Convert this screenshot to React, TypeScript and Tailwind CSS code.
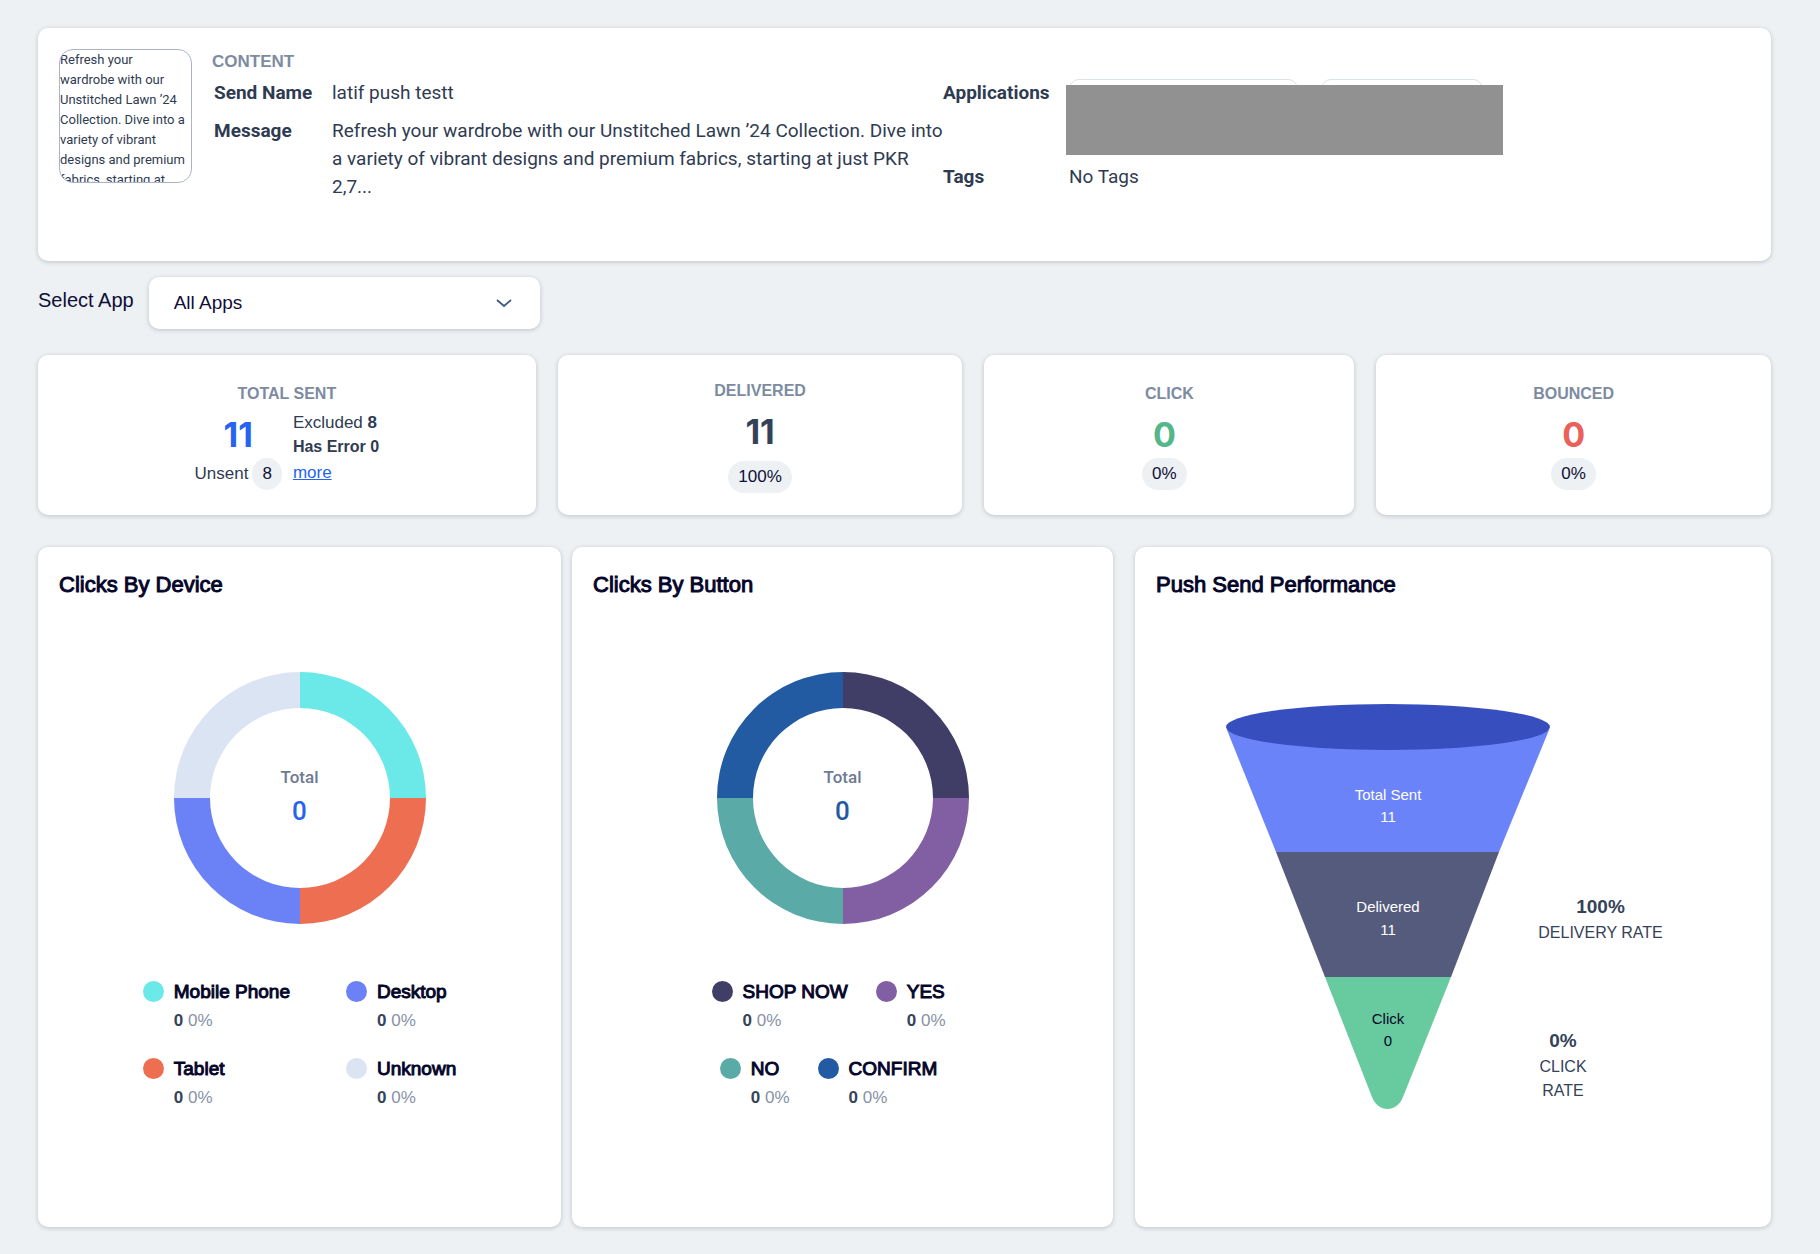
import React from "react";

const card = "rounded-[10px] bg-white shadow-[0_1px_4px_rgba(45,55,72,0.25)]";
const strong = "[-webkit-text-stroke:1px_currentColor]";
const figure = "font-[Inter,sans-serif] text-[34px] leading-[46px] font-bold";

type Slice = { label: string; color: string };

const devices: Slice[] = [
  { label: "Mobile Phone", color: "#6be8e8" },
  { label: "Desktop", color: "#6b82f7" },
  { label: "Tablet", color: "#ed6e51" },
  { label: "Unknown", color: "#dbe4f3" },
];

const buttons: Slice[] = [
  { label: "SHOP NOW", color: "#403e66" },
  { label: "YES", color: "#815fa2" },
  { label: "NO", color: "#5aaba7" },
  { label: "CONFIRM", color: "#235ba3" },
];

const message = "Refresh your wardrobe with our Unstitched Lawn ’24 Collection. Dive into a variety of vibrant designs and premium fabrics, starting at";

function Pill({ children }: { children: React.ReactNode }) {
  return (
    <span className="inline-flex h-8 items-center justify-center rounded-2xl bg-[#edf1f4] px-[10px] text-[17px] text-[#0f0f37]">
      {children}
    </span>
  );
}

function StatTitle({ children }: { children: React.ReactNode }) {
  return <h2 className="text-base leading-[26px] font-bold text-[#7d8ba1]">{children}</h2>;
}

/* Four equal quarters, listed clockwise from twelve o'clock. */
function Donut({ colors, total, totalClass }: { colors: string[]; total: number; totalClass: string }) {
  const quarters = [
    "M127 1A126 126 0 0 1 253 127H217A90 90 0 0 0 127 37Z",
    "M253 127A126 126 0 0 1 127 253V217A90 90 0 0 0 217 127Z",
    "M127 253A126 126 0 0 1 1 127H37A90 90 0 0 0 127 217Z",
    "M1 127A126 126 0 0 1 127 1V37A90 90 0 0 0 37 127Z",
  ];
  return (
    <div className="relative mx-auto mt-[70px] size-[254px]">
      <svg viewBox="0 0 254 254" className="size-full" aria-hidden="true">
        {quarters.map((d, i) => (
          <path key={d} d={d} fill={colors[i]} />
        ))}
      </svg>
      <div className="absolute inset-0 flex flex-col items-center justify-center pb-[2px] font-[Roboto,sans-serif] font-medium">
        <span className="text-[17px] leading-7 text-[#6e7a94]">Total</span>
        <span className={totalClass}>{total}</span>
      </div>
    </div>
  );
}

function LegendItem({ item }: { item: Slice }) {
  return (
    <li className="flex gap-[10px]">
      <span className="mt-[3px] size-[21px] rounded-full" style={{ backgroundColor: item.color }} />
      <div>
        <div className={"text-[19px] leading-7 text-[#050529] " + strong}>{item.label}</div>
        <div className="text-[17px] leading-[30px]">
          <span className="font-bold text-[#364359]">0</span> <span className="text-[#8692a6]">0%</span>
        </div>
      </div>
    </li>
  );
}

function CardTitle({ children }: { children: React.ReactNode }) {
  return <h2 className={"text-[22px] leading-8 text-[#050529] " + strong}>{children}</h2>;
}

function Funnel() {
  return (
    <svg viewBox="0 0 324 407" className="w-[324px] shrink-0 text-[15px]" role="img" aria-label="Push send funnel">
      <path d="M1 26L50 148H273L323 26Z" fill="#6b83f8" />
      <path d="M50 148L99 273H225L273 148Z" fill="#555b7d" />
      <path d="M99 273L146 393C152 409 171 409 177 393L225 273Z" fill="#67cb9f" />
      <ellipse cx="162" cy="23" rx="162" ry="23" fill="#374ebf" />
      <g textAnchor="middle" fill="#ffffff">
        <text x="162" y="96">Total Sent</text>
        <text x="162" y="118">11</text>
        <text x="162" y="208">Delivered</text>
        <text x="162" y="231">11</text>
      </g>
      <g textAnchor="middle" fill="#050529">
        <text x="162" y="320">Click</text>
        <text x="162" y="342">0</text>
      </g>
    </svg>
  );
}

export default function App() {
  return (
    <main className="min-h-screen bg-[#edf1f4] pt-7 pr-[49px] pb-[27px] pl-[38px] font-['Liberation_Sans',Arial,sans-serif] text-[#2f3b52]">
      <section className={"flex gap-5 px-[21px] pt-[21px] pb-[60px] " + card}>
        <div className="h-[134px] w-[133px] shrink-0 overflow-hidden rounded-[14px] border border-[#a9b5c6] pr-[2px] font-[Roboto,sans-serif] text-[13px] leading-5">
          {message}
        </div>
        <div className="min-w-0 flex-1">
          <h2 className="text-[17px] leading-[26px] font-bold text-[#7d8ba1]">CONTENT</h2>
          <div className="mt-1 grid grid-cols-[730fr_808fr] font-[Roboto,sans-serif] text-[19px] leading-7">
            <dl className="grid grid-cols-[118px_1fr] content-start gap-y-[10px] pl-[2px]">
              <dt className="font-bold">Send Name</dt>
              <dd>latif push testt</dd>
              <dt className="font-bold">Message</dt>
              <dd className="-mr-1">{message} just PKR 2,7...</dd>
            </dl>
            <dl className="grid grid-cols-[126px_1fr] content-start gap-y-[10px] pl-px">
              <dt className="font-bold">Applications</dt>
              <dd className="relative flex h-[74px] gap-[23px]">
                <span className="h-8 w-[229px] rounded-[10px] border border-[#dbe2ea]" />
                <span className="h-8 w-[162px] rounded-[10px] border border-[#dbe2ea]" />
                <span className="absolute top-[6px] -left-[3px] h-[70px] w-[437px] bg-[#919191]" />
              </dd>
              <dt className="font-bold">Tags</dt>
              <dd>No Tags</dd>
            </dl>
          </div>
        </div>
      </section>

      <div className="mt-4 flex gap-[15px]">
        <label htmlFor="app" className="pt-[9px] text-[20px] leading-7 text-[#0f0f37]">
          Select App
        </label>
        <div className={"relative h-[52px] w-[391px] " + card}>
          <select id="app" className="size-full appearance-none rounded-[10px] px-[25px] text-[19px] text-[#0f0f37]">
            <option>All Apps</option>
          </select>
          <svg viewBox="0 0 16 10" className="pointer-events-none absolute top-[21px] right-7 h-[10px] w-4" aria-hidden="true">
            <path d="M1 2L8 8L15 2" fill="none" stroke="#3b5b85" strokeWidth="1.8" />
          </svg>
        </div>
      </div>

      <div className="mt-[26px] grid grid-cols-[498fr_405fr_370fr_395fr] gap-x-[22px] text-center">
        <section className={"h-40 pt-[26px] " + card}>
          <StatTitle>TOTAL SENT</StatTitle>
          <div className="flex justify-center gap-[11px] text-[17px]">
            <div className="pt-[5px]">
              <div className={"text-[#2563f0] " + figure}>11</div>
              <div className="flex items-center gap-1">
                Unsent <Pill>8</Pill>
              </div>
            </div>
            <div className="pt-1 text-left leading-6">
              <div>
                Excluded <b>8</b>
              </div>
              <div className="text-base leading-6 font-bold">Has Error 0</div>
              <a href="#more" className="mt-[2px] block text-[#2563f0] underline">
                more
              </a>
            </div>
          </div>
        </section>
        <section className={"h-40 pt-[23px] " + card}>
          <StatTitle>DELIVERED</StatTitle>
          <div className={"mt-[5px] text-[#344259] " + figure}>11</div>
          <div className="pt-[6px]">
            <Pill>100%</Pill>
          </div>
        </section>
        <section className={"h-40 pt-[26px] " + card}>
          <StatTitle>CLICK</StatTitle>
          <div className="pr-[10px]">
            <div className={"mt-[5px] text-[#54b68b] " + figure}>0</div>
            <Pill>0%</Pill>
          </div>
        </section>
        <section className={"h-40 pt-[26px] " + card}>
          <StatTitle>BOUNCED</StatTitle>
          <div className={"mt-[5px] text-[#ea605b] " + figure}>0</div>
          <Pill>0%</Pill>
        </section>
      </div>

      <div className="mt-8 grid grid-cols-[1075fr_636fr] gap-x-[22px]">
        <div className="grid grid-cols-[523fr_541fr] gap-x-[11px]">
          <section className={"h-[680px] px-[21px] pt-[22px] " + card}>
            <CardTitle>Clicks By Device</CardTitle>
            <Donut
              colors={["#6be8e8", "#ed6e51", "#6b82f7", "#dbe4f3"]}
              total={0}
              totalClass="text-[26px] leading-10 text-[#2563f0]"
            />
            <ul className="mt-[53px] grid grid-cols-[auto_auto] justify-center gap-x-[56px] gap-y-[19px]">
              {devices.map((item) => (
                <LegendItem key={item.label} item={item} />
              ))}
            </ul>
          </section>
          <section className={"h-[680px] px-[21px] pt-[22px] " + card}>
            <CardTitle>Clicks By Button</CardTitle>
            <Donut
              colors={["#403e66", "#815fa2", "#5aaba7", "#235ba3"]}
              total={0}
              totalClass="text-[26px] leading-10 text-[#235ba3]"
            />
            <ul className="mx-auto mt-[53px] flex w-[280px] flex-wrap justify-center gap-y-[19px] *:mr-7">
              {buttons.map((item) => (
                <LegendItem key={item.label} item={item} />
              ))}
            </ul>
          </section>
        </div>
        <section className={"h-[680px] px-[21px] pt-[22px] " + card}>
          <CardTitle>Push Send Performance</CardTitle>
          <div className="mt-[103px] flex pl-[70px]">
            <Funnel />
            <div className="pt-[189px] text-center text-base leading-6 text-[#344259]">
              <div className="-ml-3 w-[125px]">
                <div className="text-[19px] leading-7 font-bold">100%</div>
                <div className="whitespace-nowrap">DELIVERY RATE</div>
              </div>
              <div className="mt-[82px] -ml-3 w-[50px]">
                <div className="text-[19px] leading-7 font-bold">0%</div>
                <div>CLICK RATE</div>
              </div>
            </div>
          </div>
        </section>
      </div>
    </main>
  );
}
